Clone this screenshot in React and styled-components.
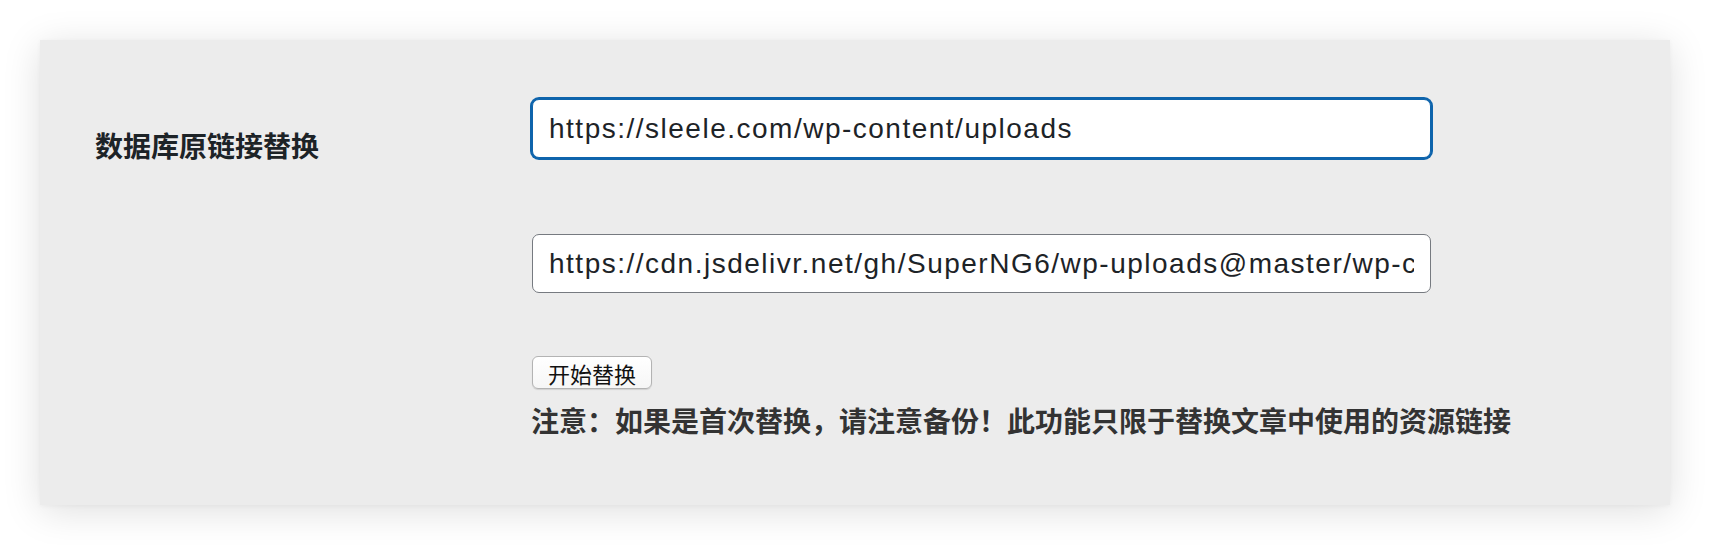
import React from "react";
import styled, { createGlobalStyle } from "styled-components";

const GlobalStyle = createGlobalStyle`
  html, body {
    margin: 0;
    padding: 0;
    background: #ffffff;
  }
  body {
    font-family: "Liberation Sans", Arial, "Noto Sans CJK SC", sans-serif;
  }
  * { box-sizing: border-box; }
`;

const Page = styled.div`
  padding: 40px 40px 40px 40px;
`;

const Panel = styled.section`
  background: #ececec;
  box-shadow: 0 6px 36px rgba(0, 0, 0, 0.13), 0 1px 4px rgba(0, 0, 0, 0.04);
  padding: 59px 0 67px 55px;
`;

const FormGrid = styled.div`
  display: grid;
  grid-template-columns: 437px 899px;
  grid-template-rows: 59px auto auto;
`;

const Label = styled.div`
  font-family: "Noto Sans CJK SC", "Noto Sans", sans-serif;
  font-weight: 700;
  font-size: 28px;
  line-height: 36px;
  color: #1d2327;
  padding-top: 28px;
  height: 59px;
  overflow: visible;
  white-space: nowrap;
`;

const Empty = styled.div``;

const Field = styled.div`
  display: flex;
  flex-direction: column;
  align-items: flex-start;
  margin-top: ${(p) => p.$top || 0}px;
`;

const TextInput = styled.input`
  width: 899px;
  height: 59px;
  padding: 0 16px;
  border: 1px solid ${(p) => (p.$focused ? "#0e64ac" : "#767a80")};
  box-shadow: ${(p) => (p.$focused ? "0 0 0 2px #0e64ac" : "none")};
  border-radius: 7px;
  background: #ffffff;
  font-family: "Liberation Sans", Arial, sans-serif;
  font-size: 28px;
  letter-spacing: 1.5px;
  color: #1d2327;
  outline: none;
`;

const Button = styled.button`
  height: 33px;
  padding: 0 15px;
  border: 1px solid #b3b3b3;
  border-radius: 6px;
  background: linear-gradient(#ffffff, #f6f6f6);
  box-shadow: 0 1px 1px rgba(0, 0, 0, 0.12);
  font-family: "Noto Sans CJK SC", sans-serif;
  font-size: 22px;
  line-height: 1;
  color: #111;
  cursor: pointer;
`;

const Note = styled.p`
  margin: 13px 0 0 -1px;
  font-family: "Noto Sans CJK SC", sans-serif;
  font-weight: 700;
  font-size: 28px;
  line-height: 36px;
  color: #333333;
  white-space: nowrap;
`;

export default function App() {
  return (
    <>
      <GlobalStyle />
      <Page>
        <Panel>
          <FormGrid>
            <Label>数据库原链接替换</Label>
            <Field>
              <TextInput
                $focused
                readOnly
                defaultValue="https://sleele.com/wp-content/uploads"
              />
            </Field>
            <Empty />
            <Field $top={76}>
              <TextInput
                readOnly
                defaultValue="https://cdn.jsdelivr.net/gh/SuperNG6/wp-uploads@master/wp-content/uploads"
              />
            </Field>
            <Empty />
            <Field $top={63}>
              <Button type="button">开始替换</Button>
              <Note>注意：如果是首次替换，请注意备份！此功能只限于替换文章中使用的资源链接</Note>
            </Field>
          </FormGrid>
        </Panel>
      </Page>
    </>
  );
}
